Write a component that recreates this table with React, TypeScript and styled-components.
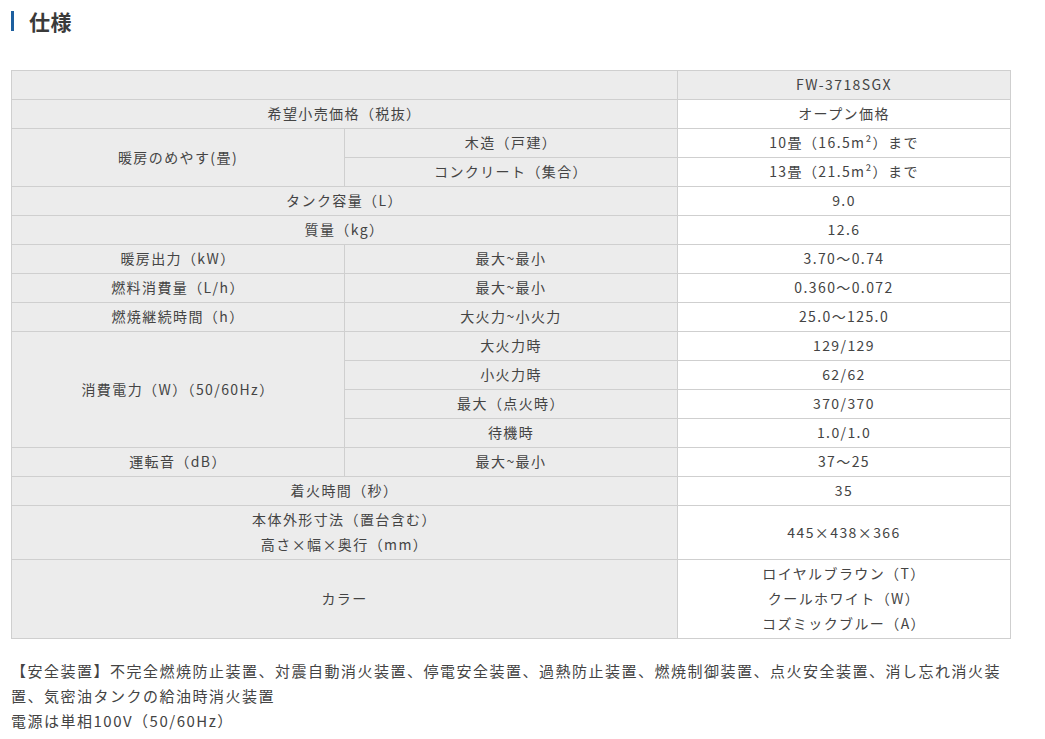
import React from "react";
import styled, { createGlobalStyle } from "styled-components";

const GlobalStyle = createGlobalStyle`
  html, body { margin: 0; padding: 0; background: #fff; }
  body {
    font-family: "Noto Sans CJK JP", "Noto Sans", sans-serif;
    color: #444;
  }
`;

const Page = styled.div`
  padding: 6px 11px 0 11px;
  width: 999px;
`;

const Heading = styled.h2`
  margin: 0 0 34px 0;
  display: flex;
  align-items: center;
  gap: 15px;
  font-size: 21px;
  line-height: 30px;
  font-weight: 700;
  color: #3a3a3a;
  letter-spacing: 0.02em;
  &::before {
    content: "";
    display: block;
    width: 3px;
    height: 20px;
    background: #1d5f9f;
  }
`;

const Table = styled.table`
  width: 999px;
  table-layout: fixed;
  border-collapse: collapse;
  font-size: 14px;
  letter-spacing: 0.1em;
  color: #444;
`;

const Cell = styled.td<{ $variant?: "label" | "value" | "head" }>`
  border: 1px solid #cfcfcf;
  padding: 1px 10px 2px;
  line-height: 25px;
  text-align: center;
  vertical-align: middle;
  background: ${(p) => (p.$variant === "value" ? "#fff" : "#ececec")};
  font-weight: 400;
`;

const Notes = styled.div`
  margin-top: 19px;
  font-size: 15px;
  line-height: 25px;
  letter-spacing: 0.1em;
  color: #444;
`;

const NoteLine = styled.p`
  margin: 0;
`;

type Row =
  | { kind: "span"; label: React.ReactNode; value: React.ReactNode }
  | { kind: "split"; label?: React.ReactNode; rows?: number; sub: string; value: React.ReactNode };

const rows: Row[] = [
  { kind: "span", label: "希望小売価格（税抜）", value: "オープン価格" },
  { kind: "split", label: "暖房のめやす(畳)", rows: 2, sub: "木造（戸建）", value: "10畳（16.5m²）まで" },
  { kind: "split", sub: "コンクリート（集合）", value: "13畳（21.5m²）まで" },
  { kind: "span", label: "タンク容量（L）", value: "9.0" },
  { kind: "span", label: "質量（kg）", value: "12.6" },
  { kind: "split", label: "暖房出力（kW）", rows: 1, sub: "最大~最小", value: "3.70～0.74" },
  { kind: "split", label: "燃料消費量（L/h）", rows: 1, sub: "最大~最小", value: "0.360～0.072" },
  { kind: "split", label: "燃焼継続時間（h）", rows: 1, sub: "大火力~小火力", value: "25.0～125.0" },
  { kind: "split", label: "消費電力（W）（50/60Hz）", rows: 4, sub: "大火力時", value: "129/129" },
  { kind: "split", sub: "小火力時", value: "62/62" },
  { kind: "split", sub: "最大（点火時）", value: "370/370" },
  { kind: "split", sub: "待機時", value: "1.0/1.0" },
  { kind: "split", label: "運転音（dB）", rows: 1, sub: "最大~最小", value: "37～25" },
  { kind: "span", label: "着火時間（秒）", value: "35" },
  {
    kind: "span",
    label: (
      <>
        本体外形寸法（置台含む）
        <br />
        高さ×幅×奥行（mm）
      </>
    ),
    value: "445×438×366",
  },
  {
    kind: "span",
    label: "カラー",
    value: (
      <>
        ロイヤルブラウン（T）
        <br />
        クールホワイト（W）
        <br />
        コズミックブルー（A）
      </>
    ),
  },
];

export default function App() {
  return (
    <>
      <GlobalStyle />
      <Page>
        <Heading>仕様</Heading>
        <Table>
          <colgroup>
            <col style={{ width: "333px" }} />
            <col style={{ width: "333px" }} />
            <col style={{ width: "333px" }} />
          </colgroup>
          <tbody>
            <tr>
              <Cell as="th" colSpan={2} $variant="head"></Cell>
              <Cell as="th" $variant="head">FW-3718SGX</Cell>
            </tr>
            {rows.map((r, i) =>
              r.kind === "span" ? (
                <tr key={i}>
                  <Cell as="th" colSpan={2} $variant="label">
                    {r.label}
                  </Cell>
                  <Cell $variant="value">{r.value}</Cell>
                </tr>
              ) : (
                <tr key={i}>
                  {r.label !== undefined && (
                    <Cell as="th" rowSpan={r.rows} $variant="label">
                      {r.label}
                    </Cell>
                  )}
                  <Cell as="th" $variant="label">
                    {r.sub}
                  </Cell>
                  <Cell $variant="value">{r.value}</Cell>
                </tr>
              )
            )}
          </tbody>
        </Table>
        <Notes>
          <NoteLine>
            【安全装置】不完全燃焼防止装置、対震自動消火装置、停電安全装置、過熱防止装置、燃焼制御装置、点火安全装置、消し忘れ消火装置、気密油タンクの給油時消火装置
          </NoteLine>
          <NoteLine>電源は単相100V（50/60Hz）</NoteLine>
        </Notes>
      </Page>
    </>
  );
}
